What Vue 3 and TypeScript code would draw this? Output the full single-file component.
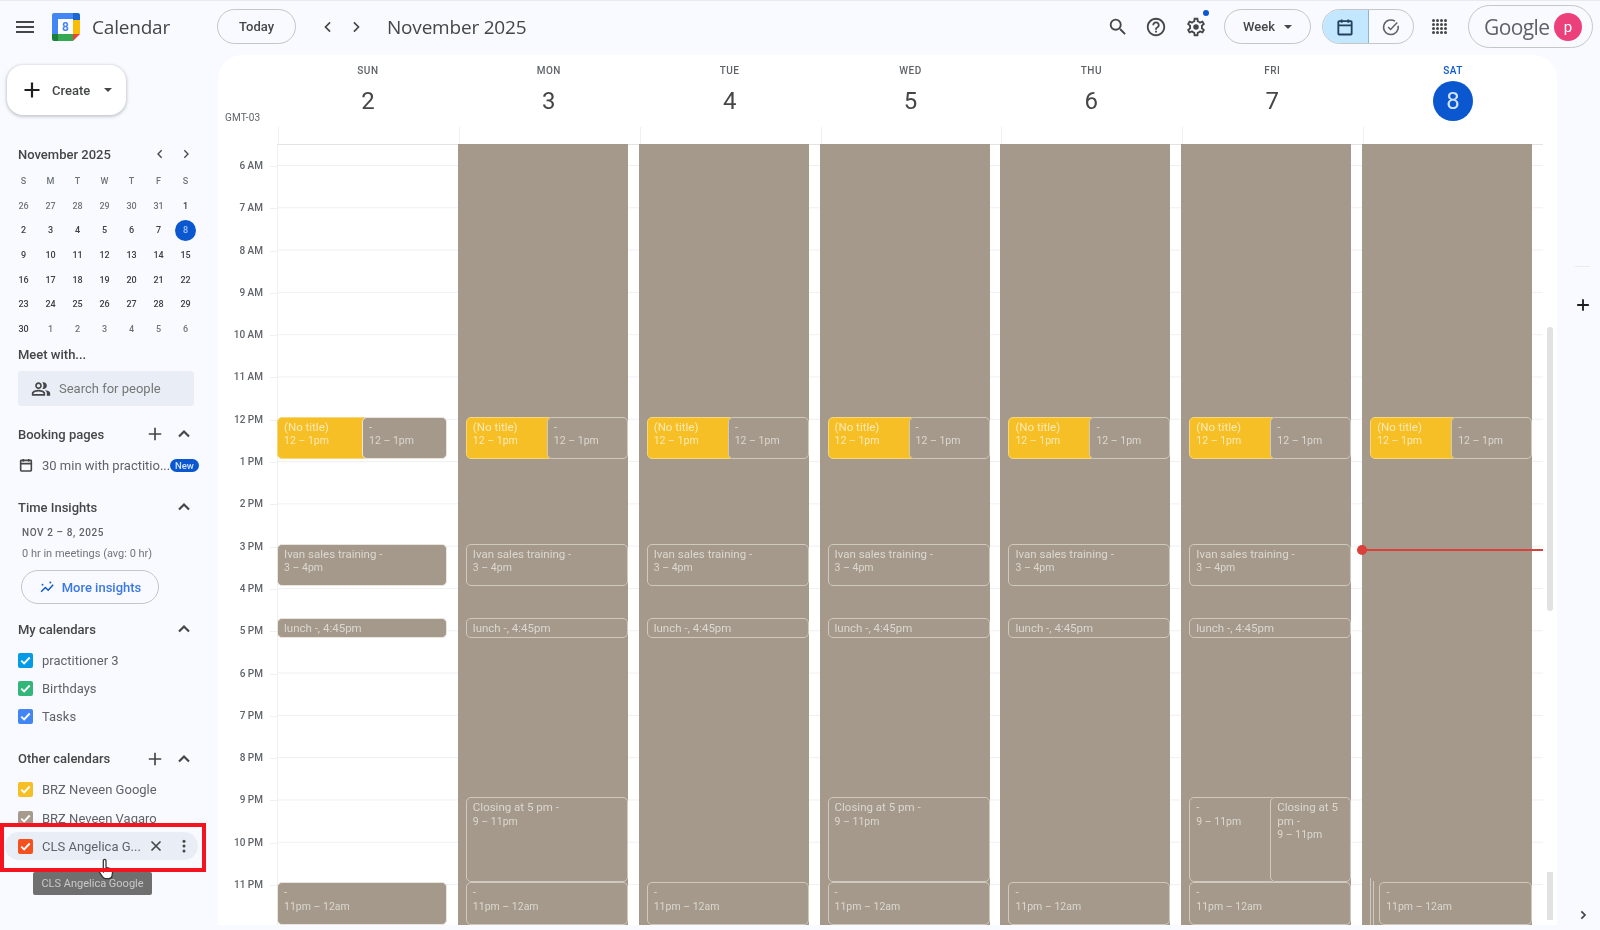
<template>
  <div class="app">
    <!-- top bar -->
    <header class="topbar">
      <button class="icon-btn menu">
        <svg viewBox="0 0 24 24" width="24" height="24"><path d="M3 18h18v-2H3v2zm0-5h18v-2H3v2zm0-7v2h18V6H3z" fill="#444746" /></svg>
      </button>
      <svg class="logo" viewBox="0 0 28 28" width="28" height="28">
        <path d="M2 0h19v6H6v15H0V2a2 2 0 0 1 2-2z" fill="#4285f4" />
        <path d="M21 0h5a2 2 0 0 1 2 2v5h-7z" fill="#1967d2" />
        <path d="M21 7h7v14h-7z" fill="#fbbc04" />
        <path d="M6 21h15v7H6z" fill="#34a853" />
        <path d="M0 21h6v7H2a2 2 0 0 1-2-2z" fill="#188038" />
        <path d="M21 21h7l-7 7z" fill="#ea4335" />
        <rect x="6" y="6" width="15" height="15" fill="#fff" />
        <text x="13.5" y="18" text-anchor="middle" class="logo-num">8</text>
      </svg>
      <span class="brand">Calendar</span>
      <button class="pill today">Today</button>
      <button class="icon-btn nav-first"><svg viewBox="0 0 24 24" width="20" height="20"><path d="M14.5 6.5 9 12l5.500 5.500" class="stroke" /></svg></button>
      <button class="icon-btn nav-next"><svg viewBox="0 0 24 24" width="20" height="20"><path d="M9.500 6.500 15 12l-5.500 5.500" class="stroke" /></svg></button>
      <span class="title">November 2025</span>

      <div class="top-right">
        <svg viewBox="0 0 24 24" width="22" height="22"><path d="M15.500 14h-.79l-.28-.27A6.471 6.471 0 0 0 16 9.500 6.500 6.500 0 1 0 9.500 16c1.610 0 3.090-.59 4.230-1.570l.27.28v.79l5 4.990L20.490 19l-4.990-5zm-6 0C7.010 14 5 11.990 5 9.500S7.010 5 9.500 5 14 7.010 14 9.500 11.990 14 9.500 14z" fill="#444746" /></svg>
        <svg class="help" viewBox="0 0 24 24" width="22" height="22"><path d="M11 18h2v-2h-2v2zm1-16C6.480 2 2 6.480 2 12s4.480 10 10 10 10-4.480 10-10S17.520 2 12 2zm0 18c-4.410 0-8-3.590-8-8s3.590-8 8-8 8 3.590 8 8-3.590 8-8 8zm0-14c-2.210 0-4 1.790-4 4h2c0-1.100.9-2 2-2s2 .9 2 2c0 2-3 1.750-3 5h2c0-2.250 3-2.500 3-5 0-2.210-1.790-4-4-4z" fill="#444746" /></svg>
        <div class="gear">
          <svg viewBox="0 0 24 24" width="22" height="22">
            <path d="M19.430 12.980c.04-.32.07-.64.07-.98 0-.34-.03-.66-.07-.98l2.110-1.650c.19-.15.24-.42.12-.64l-2-3.460c-.09-.16-.26-.25-.44-.25-.06 0-.12.01-.17.03l-2.490 1c-.52-.4-1.080-.73-1.690-.98l-.38-2.650C14.460 2.180 14.250 2 14 2h-4c-.25 0-.46.18-.49.42l-.38 2.650c-.61.25-1.170.59-1.690.98l-2.490-1c-.06-.02-.12-.03-.18-.03-.17 0-.34.09-.43.25l-2 3.460c-.13.22-.07.49.12.64l2.110 1.650c-.04.32-.07.65-.07.98 0 .33.03.66.07.98l-2.110 1.650c-.19.15-.24.42-.12.64l2 3.460c.09.16.26.25.44.25.06 0 .12-.01.17-.03l2.490-1c.52.4 1.080.73 1.690.98l.38 2.650c.03.24.24.42.49.42h4c.25 0 .46-.18.49-.42l.38-2.650c.61-.25 1.170-.59 1.690-.98l2.490 1c.06.02.12.03.18.03.17 0 .34-.09.43-.25l2-3.460c.12-.22.07-.49-.12-.64l-2.110-1.650zm-1.980-1.710c.04.31.05.52.05.73 0 .21-.02.43-.05.73l-.14 1.130.89.7 1.080.84-.7 1.210-1.270-.51-1.040-.42-.9.68c-.43.32-.84.56-1.250.73l-1.060.43-.16 1.130-.2 1.350h-1.400l-.19-1.350-.16-1.130-1.060-.43c-.43-.18-.83-.41-1.230-.71l-.91-.7-1.060.43-1.270.51-.7-1.210 1.080-.84.89-.7-.14-1.130c-.03-.31-.05-.54-.05-.74s.02-.43.05-.73l.14-1.130-.89-.7-1.080-.84.7-1.210 1.270.51 1.040.42.9-.68c.43-.32.84-.56 1.250-.73l1.060-.43.16-1.130.2-1.350h1.390l.19 1.350.16 1.130 1.060.43c.43.18.83.41 1.230.71l.91.7 1.060-.43 1.270-.51.7 1.210-1.070.85-.89.7.14 1.130z" fill="#444746" />
            <circle cx="12" cy="12" r="3" fill="#444746" />
          </svg>
          <span class="gear-dot"></span>
        </div>
        <button class="pill week">Week <span class="caret"></span></button>
        <div class="toggle">
          <span class="toggle-item active">
            <svg viewBox="0 0 24 24" width="20" height="20"><path d="M5 5h14a1 1 0 0 1 1 1v14a1 1 0 0 1-1 1H5a1 1 0 0 1-1-1V6a1 1 0 0 1 1-1zM4 10h16M8 3v4M16 3v4" class="stroke cal" /></svg>
          </span>
          <span class="toggle-item">
            <svg viewBox="0 0 24 24" width="20" height="20"><path d="M20.500 10.500A8.800 8.800 0 1 1 16.800 5M8.500 12l3 3 8-8.500" class="stroke thin" /></svg>
          </span>
        </div>
        <div class="apps"><span v-for="n in 16" :key="n"></span></div>
        <div class="account">
          <span class="google">Google</span>
          <span class="avatar">p</span>
        </div>
      </div>
    </header>

    <div class="body">
      <!-- left column -->
      <aside class="sidebar">
        <button class="create">
          <svg viewBox="0 0 24 24" width="24" height="24"><path d="M12 4.500v15M4.500 12h15" class="stroke plus" /></svg>
          <span>Create</span>
          <span class="caret"></span>
        </button>

        <div class="mini-head">
          <span>November 2025</span>
          <svg viewBox="0 0 24 24" width="16" height="16"><path d="M14.500 6.500 9 12l5.500 5.500" class="stroke" /></svg>
          <svg viewBox="0 0 24 24" width="16" height="16"><path d="M9.500 6.500 15 12l-5.500 5.500" class="stroke" /></svg>
        </div>
        <div class="mini-grid">
          <span v-for="(d, i) in miniDays" :key="i" :class="['mini-cell', { head: i < 7, sel: i === 20, out: isOut(i) }]">{{ d }}</span>
        </div>

        <h3 class="side-title meet">Meet with...</h3>
        <div class="people">
          <svg viewBox="0 0 24 24" width="20" height="20">
            <path d="M16.670 13.130C18.040 14.060 19 15.320 19 17v3h4v-3c0-2.180-3.570-3.470-6.330-3.870zM15 12c2.210 0 4-1.790 4-4s-1.790-4-4-4c-.47 0-.91.1-1.330.26C14.500 5.290 15 6.590 15 8s-.5 2.710-1.330 3.740c.42.16.86.26 1.330.26zM9 12c2.210 0 4-1.790 4-4s-1.790-4-4-4-4 1.790-4 4 1.790 4 4 4zm0-6c1.100 0 2 .9 2 2s-.9 2-2 2-2-.9-2-2 .9-2 2-2zM9 13c-2.670 0-8 1.340-8 4v3h16v-3c0-2.660-5.330-4-8-4zm6 5H3v-.99C3.200 16.290 6.300 15 9 15s5.800 1.290 6 2v1z" fill="#444746" />
          </svg>
          <span>Search for people</span>
        </div>

        <div class="side-head booking">
          <h3 class="side-title">Booking pages</h3>
          <svg class="head-plus" viewBox="0 0 24 24" width="20" height="20"><path d="M12 4.500v15M4.500 12h15" class="stroke" /></svg>
          <svg viewBox="0 0 24 24" width="20" height="20"><path d="M6 15l6-6 6 6" class="stroke bold" /></svg>
        </div>
        <div class="booking-row">
          <svg viewBox="0 0 24 24" width="16" height="16"><path d="M5 5h14a1 1 0 0 1 1 1v14a1 1 0 0 1-1 1H5a1 1 0 0 1-1-1V6a1 1 0 0 1 1-1zM4 10h16M8 3v4M16 3v4" class="stroke cal-dark" /></svg>
          <span class="booking-name">30 min with practitio...</span>
          <span class="badge">New</span>
        </div>

        <div class="side-head insights">
          <h3 class="side-title">Time Insights</h3>
          <svg viewBox="0 0 24 24" width="20" height="20"><path d="M6 15l6-6 6 6" class="stroke bold" /></svg>
        </div>
        <div class="range">NOV 2 – 8, 2025</div>
        <div class="meetings">0 hr in meetings (avg: 0 hr)</div>
        <button class="more">
          <svg viewBox="0 0 24 24" width="17" height="17"><path d="M3 18l6-6 4 4 7-8" class="stroke blue" /><circle cx="16" cy="5" r="1.300" fill="#0b57d0" /><circle cx="5" cy="8" r="1.300" fill="#0b57d0" /></svg>
          More insights
        </button>

        <div class="side-head my-cals">
          <h3 class="side-title">My calendars</h3>
          <svg viewBox="0 0 24 24" width="20" height="20"><path d="M6 15l6-6 6 6" class="stroke bold" /></svg>
        </div>
        <div v-for="c in myCalendars" :key="c.name" class="cal-row">
          <span class="check" :style="{ background: c.color }">
            <svg viewBox="0 0 16 16" width="15" height="15"><path d="M3.500 8.200 6.500 11l6-6.200" class="tick" /></svg>
          </span>
          <span>{{ c.name }}</span>
        </div>

        <div class="side-head others">
          <h3 class="side-title">Other calendars</h3>
          <svg class="head-plus" viewBox="0 0 24 24" width="20" height="20"><path d="M12 4.500v15M4.500 12h15" class="stroke" /></svg>
          <svg viewBox="0 0 24 24" width="20" height="20"><path d="M6 15l6-6 6 6" class="stroke bold" /></svg>
        </div>
        <div v-for="c in otherCalendars" :key="c.name" class="cal-row">
          <span class="check" :style="{ background: c.color }">
            <svg viewBox="0 0 16 16" width="15" height="15"><path d="M3.500 8.200 6.500 11l6-6.200" class="tick" /></svg>
          </span>
          <span>{{ c.name }}</span>
        </div>
        <div class="cal-row hovered">
          <span class="check" style="background: #f4511e">
            <svg viewBox="0 0 16 16" width="15" height="15"><path d="M3.500 8.200 6.500 11l6-6.200" class="tick" /></svg>
          </span>
          <span class="hover-name">CLS Angelica G...</span>
          <svg viewBox="0 0 24 24" width="18" height="18"><path d="M6 6l12 12M18 6 6 18" class="stroke x" /></svg>
          <svg class="dots" viewBox="0 0 24 24" width="18" height="18"><circle cx="12" cy="5.500" r="2" /><circle cx="12" cy="12" r="2" /><circle cx="12" cy="18.500" r="2" /></svg>
        </div>

        <!-- overlays from the annotated screenshot -->
        <div class="tooltip">CLS Angelica Google</div>
        <svg class="hand" viewBox="0 0 20 26" width="18" height="24">
          <path d="M7 2.500c0-1.800 3-1.800 3 0V10l5 1.500c1.800.6 2.500 1.800 2.300 3.500l-.6 4.500c-.3 2-1.600 3-3.500 3H9.500c-1.500 0-2.500-.6-3.300-1.800L2.500 15c-.9-1.500 1-3 2.300-1.800L7 15z" fill="#fff" stroke="#333" stroke-width="1.400" />
        </svg>
        <div class="red-box"></div>
      </aside>

      <!-- week view -->
      <main class="panel">
        <div class="week-head">
          <div class="gmt">GMT-03</div>
          <div v-for="d in days" :key="d.name" class="day-head">
            <span :class="['day-name', { now: d.today }]">{{ d.name }}</span>
            <span :class="['day-num', { now: d.today }]">{{ d.num }}</span>
          </div>
        </div>
        <div class="week-body">
          <div class="gutter">
            <div v-for="h in hours" :key="h" class="hour">
              <span class="hour-label">{{ h }}</span>
              <span class="tick-line"></span>
            </div>
          </div>
          <div v-for="(d, i) in days" :key="d.name" class="day-col">
            <div v-if="i > 0" class="closed"></div>
            <div
              v-for="(e, j) in eventsFor(i)"
              :key="j"
              :class="['event', e.kind]"
              :style="eventStyle(e)"
            >
              <template v-if="e.compact">{{ e.title }}, {{ e.time }}</template>
              <template v-else>
                <div>{{ e.title }}</div>
                <div class="event-time">{{ e.time }}</div>
              </template>
            </div>
          </div>
          <div class="now-line"><span class="now-dot"></span></div>
        </div>
        <div class="scroll-thumb"></div>
        <div class="scroll-end"></div>
      </main>

      <div class="rail">
        <span class="rail-rule"></span>
        <svg viewBox="0 0 24 24" width="20" height="20"><path d="M12 5v14M5 12h14" class="stroke plus" /></svg>
        <svg class="rail-next" viewBox="0 0 24 24" width="16" height="16"><path d="M9.500 6.500 15 12l-5.500 5.500" class="stroke bold" /></svg>
      </div>
    </div>
  </div>
</template>

<script setup lang="ts">
interface CalEvent {
  title: string
  time: string
  start: number
  end: number
  left: number
  width: number
  kind: string
  compact?: boolean
}

const HOUR = 42.3
const GRID_START = 5.5

const days = [
  { name: 'SUN', num: 2 },
  { name: 'MON', num: 3 },
  { name: 'TUE', num: 4 },
  { name: 'WED', num: 5 },
  { name: 'THU', num: 6 },
  { name: 'FRI', num: 7 },
  { name: 'SAT', num: 8, today: true }
]

const hours = [
  '6 AM', '7 AM', '8 AM', '9 AM', '10 AM', '11 AM', '12 PM', '1 PM', '2 PM',
  '3 PM', '4 PM', '5 PM', '6 PM', '7 PM', '8 PM', '9 PM', '10 PM', '11 PM'
]

const miniDays = [
  'S', 'M', 'T', 'W', 'T', 'F', 'S',
  26, 27, 28, 29, 30, 31, 1,
  2, 3, 4, 5, 6, 7, 8,
  9, 10, 11, 12, 13, 14, 15,
  16, 17, 18, 19, 20, 21, 22,
  23, 24, 25, 26, 27, 28, 29,
  30, 1, 2, 3, 4, 5, 6
]

// leading and trailing days that belong to other months
function isOut (i: number) {
  return (i >= 7 && i < 13) || i > 42
}

const myCalendars = [
  { name: 'practitioner 3', color: '#039be5' },
  { name: 'Birthdays', color: '#33b679' },
  { name: 'Tasks', color: '#4285f4' }
]

const otherCalendars = [
  { name: 'BRZ Neveen Google', color: '#f6bf26' },
  { name: 'BRZ Neveen Vagaro', color: '#a79b8e' }
]

function eventsFor (day: number): CalEvent[] {
  const solid = day === 0
  const x = solid ? -1 : 7
  const full = solid ? 170 : 162
  const half = solid ? 85 : 81
  const kind = solid ? 'solid' : 'outlined'

  const list: CalEvent[] = [
    { title: '(No title)', time: '12 – 1pm', start: 11.93, end: 12.93, left: x, width: half + 6, kind: 'yellow' },
    { title: '-', time: '12 – 1pm', start: 11.93, end: 12.93, left: x + half, width: full - half, kind }
  ]

  if (day !== 6) {
    list.push({ title: 'Ivan sales training -', time: '3 – 4pm', start: 14.93, end: 15.93, left: x, width: full, kind })
    list.push({ title: 'lunch -', time: '4:45pm', start: 16.68, end: 17.15, left: x, width: full, kind, compact: true })
  }
  if (day === 1 || day === 3) {
    list.push({ title: 'Closing at 5 pm -', time: '9 – 11pm', start: 20.92, end: 22.93, left: x, width: full, kind })
  }
  if (day === 5) {
    list.push({ title: '-', time: '9 – 11pm', start: 20.92, end: 22.93, left: x, width: half + 6, kind })
    list.push({ title: 'Closing at 5 pm -', time: '9 – 11pm', start: 20.92, end: 22.93, left: x + half, width: full - half, kind })
  }
  if (day === 6) {
    list.push({ title: '', time: '', start: 22.82, end: 23.93, left: x, width: full, kind: 'ghost' })
    list.push({ title: '', time: '', start: 22.9, end: 23.93, left: x + 3, width: full - 3, kind: 'ghost' })
    list.push({ title: '-', time: '11pm – 12am', start: 22.93, end: 23.93, left: x + 9, width: full - 9, kind })
  } else {
    list.push({ title: '-', time: '11pm – 12am', start: 22.93, end: 23.93, left: x, width: full, kind })
  }
  return list
}

function eventStyle (e: CalEvent) {
  return {
    top: (e.start - GRID_START) * HOUR + 'px',
    height: (e.end - e.start) * HOUR + 'px',
    left: e.left + 'px',
    width: e.width + 'px'
  }
}
</script>

<style>
html, body {
  margin: 0;
  overflow: hidden;
  background: #f8faff;
}
</style>

<style scoped>
.app {
  width: 1600px;
  height: 930px;
  display: flex;
  flex-direction: column;
  background: #f8faff;
  font-family: Roboto, "Liberation Sans", sans-serif;
  color: #444746;
  overflow: hidden;
  filter: blur(0.55px);
}

button {
  font: inherit;
  color: inherit;
  background: none;
  border: none;
  padding: 0;
}

.stroke {
  fill: none;
  stroke: #444746;
  stroke-width: 2;
}
.stroke.bold { stroke-width: 2.6; }
.stroke.plus { stroke: #1f1f1f; stroke-width: 2.2; }
.stroke.thin { stroke: #5f6368; stroke-width: 1.800; }
.stroke.cal { stroke: #25405f; stroke-width: 2.200; }
.stroke.cal-dark { stroke-width: 2.400; }
.stroke.blue { stroke: #0b57d0; }
.stroke.x { stroke-width: 2.200; }

/* ---------- top bar ---------- */
.topbar {
  height: 55px;
  flex: none;
  display: flex;
  align-items: center;
  box-sizing: border-box;
  border-top: 1px solid #e8eaed;
  padding: 0 0 3px 13px;
}
.icon-btn {
  width: 24px;
  height: 24px;
  display: flex;
  align-items: center;
  justify-content: center;
}
.logo { margin-left: 15px; }
.logo-num {
  font-size: 12px;
  font-weight: 700;
  fill: #4285f4;
  font-family: Roboto, sans-serif;
}
.brand {
  margin-left: 12px;
  font-size: 19px;
  font-family: "Open Sans", sans-serif;
  width: 125px;
  letter-spacing: -0.2px;
}
.pill {
  box-sizing: border-box;
  height: 35px;
  border: 1.5px solid #c4c7c5;
  border-radius: 18px;
  font-size: 13px;
  font-weight: 500;
  display: flex;
  align-items: center;
  justify-content: center;
}
.today { width: 79px; }
.nav-first { margin-left: 20px; }
.nav-next { margin-left: 4px; }
.title {
  margin-left: 19px;
  font-size: 19px;
  font-family: "Open Sans", sans-serif;
  letter-spacing: -0.2px;
}
.top-right {
  margin-left: auto;
  display: flex;
  align-items: center;
  padding-right: 7px;
}
.help { margin-left: 16px; }
.gear {
  position: relative;
  margin-left: 18px;
  height: 22px;
}
.gear-dot {
  position: absolute;
  top: -6px;
  right: -2px;
  width: 6px;
  height: 6px;
  border-radius: 50%;
  background: #0b57d0;
}
.week {
  width: 87px;
  margin-left: 17px;
  gap: 9px;
}
.caret {
  width: 0;
  height: 0;
  border-left: 4px solid transparent;
  border-right: 4px solid transparent;
  border-top: 4px solid #444746;
}
.toggle {
  margin-left: 11px;
  width: 92px;
  height: 35px;
  box-sizing: border-box;
  border: 1.5px solid #c4c7c5;
  border-radius: 18px;
  display: flex;
  overflow: hidden;
}
.toggle-item {
  flex: 1;
  display: flex;
  align-items: center;
  justify-content: center;
}
.toggle-item.active {
  background: #c2e7ff;
  border-right: 1px solid #8fb4cc;
}
.apps {
  margin-left: 18px;
  width: 15px;
  display: grid;
  grid-template-columns: repeat(4, 3px);
  gap: 1px;
}
.apps span {
  width: 3px;
  height: 3px;
  border-radius: 50%;
  background: #444746;
}
.account {
  margin-left: 21px;
  width: 125px;
  height: 43px;
  box-sizing: border-box;
  border: 1.5px solid #c4c7c5;
  border-radius: 22px;
  display: flex;
  align-items: center;
  padding-left: 15px;
}
.google {
  font-family: "Open Sans", sans-serif;
  font-size: 21px;
  letter-spacing: -0.6px;
  color: #5f6368;
  width: 70px;
}
.avatar {
  width: 28px;
  height: 28px;
  border-radius: 50%;
  background: #ec407a;
  color: #fff;
  font-size: 15px;
  display: flex;
  align-items: center;
  justify-content: center;
}

.body {
  flex: 1;
  display: flex;
  min-height: 0;
}

/* ---------- sidebar ---------- */
.sidebar {
  width: 218px;
  flex: none;
  position: relative;
  padding-left: 18px;
  box-sizing: border-box;
}
.create {
  margin: 10px 0 0 -11px;
  width: 119px;
  height: 50px;
  border-radius: 16px;
  background: #fff;
  box-shadow: 0 1px 3px 1px rgba(60, 64, 67, .25);
  display: flex;
  align-items: center;
  padding-left: 13px;
  box-sizing: border-box;
  font-size: 13px;
  font-weight: 500;
}
.create span:first-of-type { margin-left: 8px; margin-right: 14px; }
.mini-head {
  margin-top: 31px;
  width: 176px;
  display: flex;
  align-items: center;
  font-size: 13px;
  font-weight: 500;
  gap: 10px;
  height: 16px;
}
.mini-head span { margin-right: auto; }
.mini-grid {
  margin: 7px 0 0 -8px;
  display: grid;
  grid-template-columns: repeat(7, 27px);
  grid-auto-rows: 24.6px;
  font-size: 9px;
  font-weight: 500;
}
.mini-cell {
  display: flex;
  align-items: center;
  justify-content: center;
  color: #3c4043;
}
.mini-cell.head, .mini-cell.out { color: #70757a; }
.mini-cell.sel {
  color: #a8c7fa;
  background: #0b57d0;
  border-radius: 50%;
  width: 21px;
  height: 21px;
  justify-self: center;
  align-self: center;
}
.side-title {
  margin: 0;
  font-size: 13px;
  font-weight: 500;
  flex: 1;
}
.meet { margin-top: 6px; line-height: 16px; }
.people {
  margin-top: 8px;
  width: 176px;
  height: 35px;
  background: #e9eef6;
  border-radius: 3px;
  display: flex;
  align-items: center;
  padding-left: 13px;
  box-sizing: border-box;
  gap: 8px;
  font-size: 13px;
  color: #747775;
}
.side-head {
  width: 176px;
  height: 20px;
  display: flex;
  align-items: center;
}
.head-plus { margin-right: 9px; }
.booking { margin-top: 18px; }
.booking-row {
  margin-top: 11px;
  display: flex;
  align-items: center;
  height: 20px;
  font-size: 13px;
  color: #5f6368;
}
.booking-name { margin-left: 8px; white-space: nowrap; width: 128px; }
.badge {
  background: #0b57d0;
  color: #d3e3fd;
  font-size: 9.500px;
  font-weight: 500;
  border-radius: 8px;
  padding: 1px 5px;
}
.insights { margin-top: 22px; }
.range {
  margin: 9px 0 0 4px;
  font-size: 10px;
  font-weight: 500;
  letter-spacing: .6px;
  line-height: 14px;
  color: #5f6368;
}
.meetings {
  margin: 7px 0 0 4px;
  font-size: 11px;
  line-height: 14px;
  color: #70757a;
}
.more {
  margin: 9px 0 0 3px;
  width: 138px;
  height: 34px;
  border: 1.5px solid #c4c7c5;
  border-radius: 17px;
  color: #3b78e7;
  font-size: 13px;
  font-weight: 500;
  display: flex;
  align-items: center;
  justify-content: center;
  gap: 6px;
}
.my-cals { margin-top: 15px; }
.cal-row {
  height: 28.200px;
  display: flex;
  align-items: center;
  font-size: 13px;
  color: #5f6368;
  gap: 9px;
}
.my-cals + .cal-row { margin-top: 7px; }
.others { margin-top: 18px; }
.others + .cal-row { margin-top: 7px; }
.check {
  width: 15px;
  height: 15px;
  border-radius: 2px;
  flex: none;
  display: flex;
}
.tick {
  fill: none;
  stroke: #fff;
  stroke-width: 2;
}
.cal-row.hovered {
  margin-left: -13px;
  width: 193px;
  padding-left: 13px;
  box-sizing: border-box;
  border-radius: 14px;
  background: #e9eef6;
}
.hover-name { width: 96px; white-space: nowrap; }
.dots { margin-left: 1px; fill: #444746; }

.red-box {
  position: absolute;
  left: 0;
  top: 768px;
  width: 206px;
  height: 49px;
  box-sizing: border-box;
  border: 4px solid #f4141f;
}
.tooltip {
  position: absolute;
  left: 33px;
  top: 817px;
  width: 119px;
  height: 23px;
  background: #6f6f6f;
  color: #c9c9c9;
  font-size: 11px;
  display: flex;
  align-items: center;
  justify-content: center;
  border-radius: 2px;
}
.hand {
  position: absolute;
  left: 97px;
  top: 803px;
}

/* ---------- week view ---------- */
.panel {
  position: relative;
  width: 1339px;
  height: 870px;
  background: #fff;
  border-radius: 24px 24px 0 0;
  box-sizing: border-box;
  padding-right: 14px;
  overflow: hidden;
}
.week-head {
  height: 89px;
  display: grid;
  grid-template-columns: 59px repeat(7, 1fr);
  position: relative;
}
.gmt {
  font-size: 10px;
  color: #5f6368;
  align-self: end;
  margin: 0 0 21px 7px;
  letter-spacing: .2px;
}
.day-head {
  display: flex;
  flex-direction: column;
  align-items: center;
  border-left: 1px solid transparent;
  padding-top: 9px;
  background: linear-gradient(#eef0f2, #eef0f2) left bottom / 1px 17px no-repeat;
}
.day-name {
  font-size: 10px;
  font-weight: 500;
  letter-spacing: .5px;
  color: #5f6368;
  line-height: 13px;
}
.day-name.now { color: #0b57d0; }
.day-num {
  margin-top: 4px;
  width: 40px;
  height: 40px;
  border-radius: 50%;
  font-size: 24px;
  display: flex;
  align-items: center;
  justify-content: center;
  color: #444746;
}
.day-num.now {
  background: #0b57d0;
  color: #d3e3fd;
}
.week-body {
  position: relative;
  height: 781px;
  display: grid;
  grid-template-columns: 59px repeat(7, 1fr);
}
.gutter {
  padding-top: 22px;
  box-sizing: border-box;
}
.hour {
  height: 42.300px;
  display: flex;
  justify-content: flex-end;
}
.hour-label {
  font-size: 10px;
  font-weight: 500;
  color: #5f6368;
  transform: translateY(-50%);
  height: 12px;
  line-height: 12px;
  margin-right: 7px;
}
.tick-line {
  width: 7px;
  height: 1px;
  background: #eef0f2;
}
.day-col {
  position: relative;
  border-left: 1px solid #eef0f2;
  border-top: 1px solid #e3e3e3;
  box-sizing: border-box;
  background-image: linear-gradient(#eef0f2 1px, transparent 1px);
  background-size: 100% 42.300px;
  background-position: 0 20px;
}
.closed {
  position: absolute;
  top: -1px;
  left: -1px;
  width: 170px;
  bottom: 2px;
  background: #a4998a;
}
.event {
  position: absolute;
  box-sizing: border-box;
  border-radius: 5px;
  padding: 3px 6px;
  font-size: 11.500px;
  line-height: 13.500px;
  color: #dcd8d0;
  overflow: hidden;
  white-space: nowrap;
}
.event > div { white-space: normal; }
.event > .event-time { font-size: 10.500px; }
.event.solid {
  background: #a4998a;
  border: 1px solid #e9e4dd;
}
.event.outlined {
  background: #a4998a;
  border: 1px solid #cfc9be;
}
.event.ghost {
  background: #a4998a;
  border-left: 1px solid #cfc9be;
  border-radius: 0;
}
.event.yellow {
  background: #f6bf26;
  color: #fbe9b6;
  border: 1px solid #f6d77c;
}
.now-line {
  position: absolute;
  left: 1144px;
  right: 0;
  top: 405px;
  height: 2px;
  background: #d9413a;
}
.now-dot {
  position: absolute;
  left: -5px;
  top: -4px;
  width: 10px;
  height: 10px;
  border-radius: 50%;
  background: #d9413a;
}
.scroll-thumb {
  position: absolute;
  left: 1329px;
  top: 272px;
  width: 6px;
  height: 284px;
  background: #e2e2e2;
  border-radius: 3px;
}
.scroll-end {
  position: absolute;
  left: 1329px;
  top: 817px;
  width: 6px;
  height: 48px;
  background: #e2e2e2;
}
.rail {
  flex: 1;
  position: relative;
  display: flex;
  flex-direction: column;
  align-items: center;
  padding: 211px 0 0 8px;
}
.rail-rule {
  width: 15px;
  height: 1px;
  background: #e8eaed;
  margin-bottom: 28px;
}
.rail-next { margin-top: auto; margin-bottom: 7px; }
</style>
